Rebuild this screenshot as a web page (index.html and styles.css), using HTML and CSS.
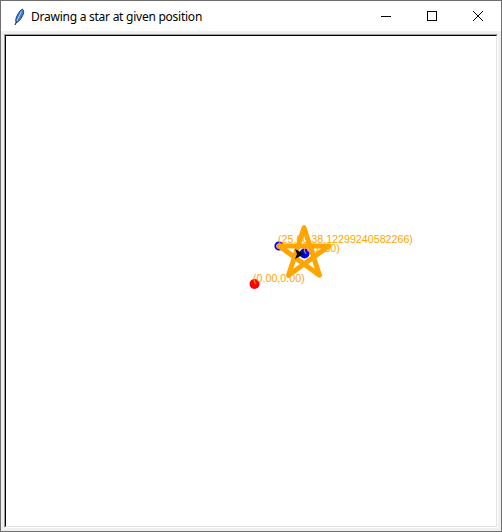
FILE: index.html
```html
<!DOCTYPE html>
<html>
<head>
<meta charset="utf-8">
<title>Drawing a star at given position</title>
<link rel="stylesheet" href="styles.css">
</head>
<body>
<div class="window">
  <div class="titlebar">
    <div class="app-icon">
      <svg width="16" height="18" viewBox="0 0 16 18">
        <path d="M12.5 1.2 C14.6 2.2 13.6 6.8 11.2 10.2 C9.6 12.6 7.6 14.4 6.2 14.6 C5.4 13.2 5.6 10.6 7 7.8 C8.6 4.4 10.8 1.6 12.5 1.2 Z" fill="#3b82d9" stroke="#1d2e52" stroke-width="0.9"/>
        <path d="M11.6 3.4 C10 6.4 8.2 10 6.6 13.6" fill="none" stroke="#cfe3ff" stroke-width="0.7"/>
        <path d="M6.6 13.8 L5.2 16.6" stroke="#1d2e52" stroke-width="1.1" stroke-linecap="round"/>
      </svg>
    </div>
    <div class="title">Drawing a star at given position</div>
    <div class="controls">
      <div class="ctrl">
        <svg width="10" height="10" viewBox="0 0 10 10"><path d="M0 5.5 H10" stroke="#000" stroke-width="1"/></svg>
      </div>
      <div class="ctrl">
        <svg width="10" height="10" viewBox="0 0 10 10"><rect x="0.5" y="0.5" width="9" height="9" fill="none" stroke="#000" stroke-width="1"/></svg>
      </div>
      <div class="ctrl">
        <svg width="10" height="10" viewBox="0 0 10 10"><path d="M0 0 L10 10 M10 0 L0 10" stroke="#000" stroke-width="1"/></svg>
      </div>
    </div>
  </div>
  <div class="body">
    <div class="canvas-outer">
      <div class="canvas-inner">
        <svg class="drawing" width="490" height="490" viewBox="0 0 490 490">
          <circle cx="248.5" cy="248" r="5" fill="#ff0000"/>
          <text class="label" x="247" y="245.5">(0.00,0.00)</text>
          <circle cx="273" cy="210" r="3.6" fill="none" stroke="#0000ff" stroke-width="2"/>
          <text class="label" x="272" y="207.4">(25.00,38.12299240582266)</text>
          <polyline points="273,209.877 323,209.877 282.549,239.266 298,191.713 313.451,239.266 273,209.877" fill="none" stroke="#ffa500" stroke-width="5" stroke-linejoin="round" stroke-linecap="round"/>
          <circle cx="298.5" cy="217.5" r="5" fill="#0000ff"/>
          <text class="label" x="297" y="215.5">(50, 30)</text>
          <polygon points="298,218 289,213 291,218 289,223" fill="#000"/>
        </svg>
      </div>
    </div>
  </div>
</div>
</body>
</html>
```
FILE: styles.css
```css
html, body {
  margin: 0;
  padding: 0;
  background: #ffffff;
}
.window {
  width: 502px;
  height: 532px;
  box-sizing: border-box;
  border: 1px solid #6e6e6e;
  display: flex;
  flex-direction: column;
  background: #f0f0f0;
}
.titlebar {
  height: 30px;
  background: #ffffff;
  display: flex;
  align-items: center;
  flex: none;
}
.app-icon {
  width: 16px;
  height: 18px;
  margin-left: 9px;
  margin-top: 1px;
  display: flex;
}
.title {
  margin-left: 5px;
  font-family: "Noto Sans", "Liberation Sans", sans-serif;
  font-size: 12px;
  letter-spacing: -0.25px;
  color: #000000;
  flex: 1;
  padding-top: 1px;
}
.controls {
  display: flex;
  height: 30px;
}
.ctrl {
  width: 46px;
  height: 30px;
  display: flex;
  align-items: center;
  justify-content: center;
}
.ctrl svg {
  display: block;
}
.body {
  flex: 1;
  padding: 3px;
  display: flex;
}
.canvas-outer {
  border: 1px solid;
  border-color: #a0a0a0 #ffffff #ffffff #a0a0a0;
  display: flex;
}
.canvas-inner {
  border: 1px solid;
  border-color: #000000 #e3e3e3 #e3e3e3 #000000;
  background: #ffffff;
  width: 490px;
  height: 490px;
}
.drawing {
  display: block;
}
.label {
  font-family: "Liberation Sans", Arial, sans-serif;
  font-size: 10.7px;
  fill: #ffa500;
}
```
